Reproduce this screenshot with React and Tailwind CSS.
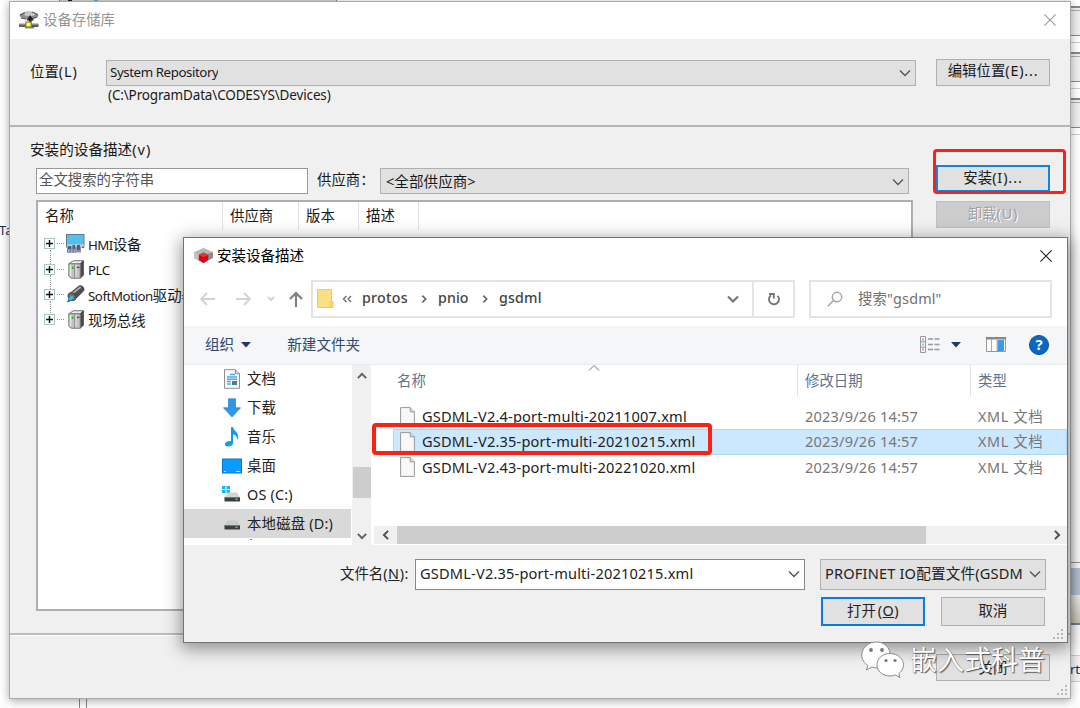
import React from "react";

const UI = "font-['Noto_Sans','Noto_Sans_CJK_SC',sans-serif]";

function Chevron({ dir = "down", className = "" }) {
  const d = { down: "M1 3.5 6 8.5 11 3.5", up: "M1 8.5 6 3.5 11 8.5", left: "M8.5 1 3.5 6 8.5 11", right: "M3.5 1 8.5 6 3.5 11" }[dir];
  return (
    <svg viewBox="0 0 12 12" className={"shrink-0 " + className} fill="none" stroke="currentColor">
      <path d={d} />
    </svg>
  );
}

function Close({ className = "" }) {
  return (
    <svg viewBox="0 0 12 12" className={"h-3 w-3 shrink-0 " + className} fill="none" stroke="currentColor" strokeWidth="1.1">
      <path d="M.4.4 11.6 11.6M11.6.4.4 11.6" />
    </svg>
  );
}

function Grip() {
  return (
    <svg viewBox="0 0 11 11" className="h-[11px] w-[11px]" fill="#b8b8b8">
      {[[8, 0], [8, 4], [8, 8], [4, 4], [4, 8], [0, 8]].map(([x, y]) => (
        <rect key={x + "-" + y} x={x} y={y} width="2" height="2" />
      ))}
    </svg>
  );
}

function RepositoryIcon() {
  return (
    <svg viewBox="0 0 20 18" className="h-[18px] w-5 shrink-0">
      <ellipse cx="10" cy="4.5" rx="9.3" ry="4" fill="#8f8f8f" />
      <ellipse cx="10.500" cy="3" rx="6" ry="2" fill="#c9c9c9" />
      <path d="M1 4 6 2M13 1l6 3M2 7l5 1M12 8l6-2" stroke="#555" />
      <path d="M11 4 7.500 9.500H10V13h2.500V9.500H15Z" fill="#222" />
      <path d="M0 12.5h19.500v2H0zM6 15h9v2.5H6z" fill="#8a8a8a" />
      <path d="M0 14.3h19.500v1.500H0z" fill="#333" />
      <rect x="6.8" y="11" width="5.4" height="5" fill="#f4ee28" stroke="#85801c" />
      <rect x="8.500" y="12.500" width="2" height="2" fill="#fff" />
    </svg>
  );
}

function InstallIcon() {
  return (
    <svg viewBox="0 0 20 16" className="h-4 w-5 shrink-0">
      <path d="M0 4.500 9.500.3l9.500 4V10l-5 2.500H5L0 10Z" fill="#8d8d8d" />
      <path d="m0 4.300 9.500-4 9.500 4-9.500 3Z" fill="#b9b9b9" />
      <path d="M0 4.300V10l5 2.500V6Z" fill="#c4c4c4" />
      <path d="m4.800 7 4.700-2.500L14.200 7v5.300l-4.700 3-4.700-3Z" fill="#d40612" />
      <path d="m4.800 7 4.700-2.500L14.200 7 9.500 9.300Z" fill="#e8343a" />
    </svg>
  );
}

function HmiIcon() {
  return (
    <svg viewBox="0 0 19 20" className="h-5 w-[19px]">
      <rect x=".5" y=".5" width="17.500" height="12.500" fill="#56bfec" stroke="#5f7f91" />
      <path d="M1 10.500h17.500v3.500H1z" fill="#c9d0da" />
      <path d="M1 12.500h14v6H1z" fill="#8b96ad" />
      <path d="M2 12h3v3H2zM6.500 11h2.500v4H6.500zM11 11h3v5h-3z" fill="#526080" />
      <path d="M1 16h9v2.500H1z" fill="#6a7796" />
      <path d="M2 17h1.500M5 17h1.500M8 17h1.500" stroke="#e8ecf3" />
      <path d="M16 12.500h2v1.500h-2z" fill="#d33" />
    </svg>
  );
}

function PlcIcon() {
  return (
    <svg viewBox="0 0 17 20" className="h-[19px] w-4">
      <path d="m.8 4 5-3.300h10.500L13 4Z" fill="#eee" stroke="#666" />
      <path d="m13 4 3.300-3.300V16L13 19.300Z" fill="#4c4c4c" stroke="#444" />
      <path d="M.8 4H13v15.300H3.500L.8 17Z" fill="#c2c2c2" stroke="#777" />
      <path d="M7 4.500v14.500" stroke="#8a8a8a" />
      <path d="M2 5h1.500v12H2zM8 5h1v13H8z" fill="#e9e9e9" />
      <path d="M4 7h2v2.500H4z" fill="#12c51b" />
      <path d="M9.500 7h2.500v1.500H9.500z" fill="#c12" />
    </svg>
  );
}

function MotionIcon() {
  return (
    <svg viewBox="0 0 19 19" className="h-[18px] w-[18px]">
      <path d="M3 9 12.500 1.200c3-1.500 6.500 2 5 5L8 15.500Z" fill="#505050" stroke="#333" />
      <path d="m5.500 9 9-7" stroke="#aaa" strokeWidth="2" />
      <ellipse cx="5.200" cy="12.300" rx="3.700" ry="4.600" transform="rotate(-40 5.200 12.300)" fill="#6c6c6c" stroke="#444" />
      <path d="m1 15.500 3.500-4.500 3 2-4.500 4.500Z" fill="#22c4ee" />
      <path d="m0 18.500 1.500-3.500 2.500 2Z" fill="#1451c9" />
    </svg>
  );
}

function NavIcon({ kind }) {
  if (kind === "doc")
    return (
      <svg viewBox="0 0 20 20" className="h-5 w-5">
        <path d="M2.5.7h11l4 4v14.6h-15Z" fill="#fbfbfb" stroke="#8a8f94" />
        <path d="M13.5.7v4h4" fill="#ddd" stroke="#8a8f94" />
        <path d="M5 8h10M5 10.300h10M5 12.500h4M5 15h4M8 5.500h5" stroke="#45aee5" strokeWidth="1.400" />
        <path d="M10 12h5v4h-5z" fill="#4a7f91" />
      </svg>
    );
  if (kind === "down")
    return (
      <svg viewBox="0 0 20 20" className="h-5 w-5">
        <path d="M6.5.8h7v9h5L10 19 1.5 9.8h5Z" fill="#3296e6" stroke="#2383d2" strokeWidth=".7" />
      </svg>
    );
  if (kind === "music")
    return (
      <svg viewBox="0 0 20 20" className="h-5 w-5" fill="#149bf0">
        <path d="M9 0h2c.5 4 6 5 5 11l-1 2c.2-4-1.500-5-4-5.500V16c0 2-2 3.500-5 3.500-2 0-3.500-1-3-2.800.5-2 3.500-3.200 6-2.700Z" />
      </svg>
    );
  if (kind === "desk")
    return (
      <svg viewBox="0 0 20 20" className="h-5 w-5">
        <rect x=".5" y="3" width="19" height="14" fill="#0c9aff" stroke="#087ac9" />
        <path d="M2 15.500h16" stroke="#bfe5ff" strokeDasharray="2 10 4 1" />
      </svg>
    );
  return (
    <svg viewBox="0 0 20 20" className="h-5 w-5">
      {kind === "os" && <path d="M0 1h3.500v3H0zM4.500 1H8v3H4.500zM0 5h3.500v3H0zM4.500 5H8v3H4.500z" fill="#16b6ed" />}
      <path d="M5.500 7.500h9.500l3 5H2.500Z" fill={kind === "os" ? "#d4d4d4" : "#cacaca"} />
      <path d="M2.500 12h15.500v4.500H2.500z" fill="#3c3e3f" />
      <path d="M2.500 12h15.500v1H2.500z" fill="#777" />
      <path d="M13.500 13.500h2v1.500h-2z" fill="#45e33c" />
    </svg>
  );
}

function FileIcon() {
  return (
    <svg viewBox="0 0 15 20" className="h-5 w-[15px] shrink-0">
      <path d="M.6.6h9.600l4.200 4.200v14.600H.6Z" fill="#f8f8f8" stroke="#999" />
      <path d="M10.200.6v4.200h4.200" fill="#ddd" stroke="#999" />
    </svg>
  );
}

function TreeRow({ icon, children, last }) {
  return (
    <div className="relative flex h-[25.4px] items-center pl-1.5">
      {!last && <span className="absolute left-[12px] top-[19px] h-[14px] border-l border-dotted border-[#999]" />}
      <span className="flex h-[11px] w-[11px] items-center justify-center border border-[#a9c4c4] bg-white">
        <svg viewBox="0 0 7 7" className="h-[7px] w-[7px]" stroke="#111" strokeWidth="1.400"><path d="M0 3.500h7M3.500 0v7" /></svg>
      </span>
      <span className="ml-0.5 w-[7px] border-t border-dotted border-[#999]" />
      <span className="ml-px flex w-[21px] justify-center">{icon}</span>
      <span className="ml-0.5 mt-0.5 whitespace-nowrap">{children}</span>
    </div>
  );
}

function Button({ className = "", children }) {
  return <div className={"flex shrink-0 items-center justify-center whitespace-nowrap bg-[#e1e1e1] " + className}>{children}</div>;
}

function Combo({ className = "", textClass = "", children }) {
  return (
    <div className={"flex shrink-0 items-center justify-between border border-[#b0b0b0] bg-[#e1e1e1] " + className}>
      <span className={"overflow-hidden whitespace-nowrap " + textClass}>{children}</span>
      <Chevron className="h-3 w-3 text-[#555] [stroke-width:1.400]" />
    </div>
  );
}

function RepositoryWindow() {
  return (
    <div className="absolute left-[9px] top-px flex h-[698px] w-[1062px] flex-col border border-[#a9a9a9] bg-[#f0f0f0] text-[13.5px] text-[#1a1a1a] shadow-[0_2px_9px_rgba(0,0,0,0.35)]">
      <div className="flex h-[37px] shrink-0 items-center bg-white pb-px pl-[9px] pr-3.5">
        <RepositoryIcon />
        <span className="ml-1 flex-1 text-[14.4px] text-[#959595]">设备存储库</span>
        <Close className="text-[#999]" />
      </div>
      <div className="flex h-[88px] shrink-0 items-start border-b-2 border-[#b5b5b5] pt-5">
        <span className="ml-5 mt-px w-[76px] text-[14.4px] leading-6">位置<span className="tracking-[0.9px]">(L)</span></span>
        <div className="flex flex-col">
          <Combo className="mt-px h-[26px] w-[810px] pl-[3px] pr-1" textClass="text-[13.300px] tracking-[-0.420px]">System Repository</Combo>
          <span className="ml-0.5 leading-[18px] tracking-[-0.150px]">(C:\ProgramData\CODESYS\Devices)</span>
        </div>
        <Button className="ml-5 h-[27px] w-[114px] border border-[#b0b0b0] pb-[3px] text-[14.4px]">编辑位置<span className="tracking-[0.8px]">(E)...</span></Button>
      </div>
      <div className="flex h-[508px] shrink-0 border-b-2 border-[#bcbcbc] pl-5 shadow-[0_1px_0_#fff]">
        <div className="flex w-[884px] flex-col">
          <span className="mt-[11px] h-[23px] text-[14.600px] leading-[23px]">安装的设备描述<span className="tracking-[1px]">(v)</span></span>
          <div className="ml-[6px] mt-[6px] flex h-[27px] items-center text-[14.4px]">
            <div className="flex h-[26px] w-[272px] items-center border border-[#999] bg-white pb-0.5 pl-0.5 text-[#555]">全文搜索的字符串</div>
            <span className="ml-[9px] w-[63px] whitespace-nowrap pb-0.5">供应商：</span>
            <Combo className="mt-px h-[26px] w-[529px] pl-[5px] pr-1 pt-px" textClass="text-[14.600px]">&lt;全部供应商&gt;</Combo>
          </div>
          <div className="ml-[6px] mt-1.5 h-[411px] w-[877px] border-2 border-[#abaeb4] bg-white text-[14.4px]">
            <div className="flex h-[28px] items-center">
              <span className="w-[184px] pl-[7px]">名称</span>
              <span className="h-full w-[76px] border-l border-[#e2e2e2] pl-[7px] leading-[28px]">供应商</span>
              <span className="h-full w-[60px] border-l border-[#e2e2e2] pl-[7px] leading-[28px]">版本</span>
              <span className="h-full w-[61px] border-x border-[#e2e2e2] pl-[7px] leading-[28px]">描述</span>
            </div>
            <div className="flex flex-col pt-px text-[14.400px]">
              <TreeRow icon={<HmiIcon />}><span className="text-[13.300px] tracking-[-0.600px]">HMI</span>设备</TreeRow>
              <TreeRow icon={<PlcIcon />}><span className="text-[13.300px] tracking-[-0.500px]">PLC</span></TreeRow>
              <TreeRow icon={<MotionIcon />}><span className="text-[13.300px] tracking-[-0.450px]">SoftMotion</span>驱动器</TreeRow>
              <TreeRow icon={<PlcIcon />} last>现场总线</TreeRow>
            </div>
          </div>
        </div>
        <div className="ml-[22px] flex flex-col gap-[9px] pt-[38px] text-[14.4px]">
          <Button className="h-[27px] w-[114px] border-2 border-[#1683d8] pb-0.5">安装<span className="tracking-[0.9px]">(I)...</span></Button>
          <Button className="h-[27px] w-[114px] border border-[#bfbfbf] !bg-[#cccccc] pb-0.5 text-[#a0a0a0] [text-shadow:1px_1px_0_#fff]">卸载<span className="tracking-[0.8px]">(U)</span></Button>
        </div>
      </div>
      <div className="flex flex-1 items-start justify-end pr-5 pt-[19px]">
        <Button className="h-[27px] w-[114px] border border-[#b0b0b0] text-[14.4px]">关闭</Button>
      </div>
      <div className="absolute bottom-0.5 right-0.5"><Grip /></div>
    </div>
  );
}

const NAV = [["doc", "文档"], ["down", "下载"], ["music", "音乐"], ["desk", "桌面"], ["os", "OS (C:)"], ["disk", "本地磁盘 (D:)"]];
const FILES = ["GSDML-V2.4-port-multi-20211007.xml", "GSDML-V2.35-port-multi-20210215.xml", "GSDML-V2.43-port-multi-20221020.xml"];

function AddressBar() {
  return (
    <div className="flex h-[38px] shrink-0 items-center">
      <svg viewBox="0 0 104 16" className="ml-4 h-4 w-[104px]" fill="none" stroke="#d2d2d2" strokeWidth="1.800">
        <path d="M7 2 1 8l6 6M1 8h14M44 2l6 6-6 6M50 8H36" />
        <path d="m68 6 3 3 3-3" />
        <path d="m90 8 6-6 6 6M96 2v14" stroke="#808080" strokeWidth="2.200" />
      </svg>
      <div className="ml-[7px] flex h-[38px] w-[484px] items-center border-2 border-[#e4e4e4] text-[14.200px] text-[#444]">
        <svg viewBox="0 0 17 20" className="ml-1 h-5 w-[17px]">
          <path d="M.5.500h14v18H.500Z" fill="#fddf83" stroke="#efc960" />
          <path d="M13.500 12h3v7h-4v-7Z" fill="#f8d15c" />
        </svg>
        <svg viewBox="0 0 10 8" className="ml-2 h-2 w-2.5" fill="none" stroke="#666" strokeWidth="1.300"><path d="M4.500 1 1.500 4l3 3M9 1 6 4l3 3" /></svg>
        <span className="ml-[10px] w-[58px] pb-0.5 font-medium tracking-[0.3px]">protos</span>
        <Chevron dir="right" className="h-2 w-2 text-[#666] [stroke-width:2.500]" />
        <span className="ml-[10px] w-[43px] pb-0.5 font-medium tracking-[0.1px]">pnio</span>
        <Chevron dir="right" className="h-2 w-2 text-[#666] [stroke-width:2.500]" />
        <span className="ml-[10px] flex-1 pb-0.5 font-medium tracking-[0.200px]">gsdml</span>
        <Chevron className="mr-[13px] h-3 w-3 text-[#777] [stroke-width:2.200]" />
        <div className="flex h-full w-[41px] items-center justify-center border-l-2 border-[#e4e4e4]">
          <svg viewBox="0 0 14 14" className="h-3.5 w-3.5" fill="none" stroke="#757575" strokeWidth="1.900"><path d="M10.500 3.800A5 5 0 1 1 4 3.300M2 2h4.800v4.500" /></svg>
        </div>
      </div>
      <div className="ml-3.5 flex h-[38px] w-[243px] items-center border-2 border-[#e4e4e4] text-[14.4px] text-[#707070]">
        <svg viewBox="0 0 16 16" className="ml-4 h-4 w-4" fill="none" stroke="#a8a0a6" strokeWidth="1.400"><circle cx="10" cy="6" r="4.700" /><path d="M6.500 9.500.8 15.200" /></svg>
        <span className="ml-[15px] tracking-[0.150px]">搜索"gsdml"</span>
      </div>
    </div>
  );
}

function Toolbar() {
  return (
    <div className="mt-2 flex h-[39px] shrink-0 items-center border-b border-[#e9ebed] bg-[#f4f6f8] pb-px text-[14.600px] text-[#2f4a70]">
      <span className="ml-[21px]">组织</span>
      <svg viewBox="0 0 10 6" className="ml-[7px] h-1.5 w-2.5" fill="#1f3b63"><path d="M0 0h10L5 5.500Z" /></svg>
      <span className="ml-9 flex-1">新建文件夹</span>
      <svg viewBox="0 0 20 17" className="h-[17px] w-5" fill="none" stroke="#999">
        <path d="M.5.500h5v16h-5zM.500 5.800h5M.500 11.200h5" />
        <path d="M8 3h5M14.500 3h5M8 8.500h5M14.500 8.500h5M8 13.500h5M14.500 13.500h5" strokeWidth="1.300" />
        <path d="M3 7.500v2" stroke="#3a8be0" /><path d="M3 12.500v2" stroke="#d33" /><path d="M3 2.500v2" stroke="#666" />
      </svg>
      <svg viewBox="0 0 10 6" className="ml-[11px] h-1.5 w-2.5" fill="#1f3b63"><path d="M0 0h10L5 5.500Z" /></svg>
      <svg viewBox="0 0 20 15" className="ml-[25px] h-[15px] w-5">
        <path d="M.5.500h19v14H.500Z" fill="#fff" stroke="#999" /><path d="M0 0h20v2.500H0Z" fill="#888" />
        <path d="M5.500 2v12M11 2v12" stroke="#aaa" /><path d="M11.500 3H18v11h-6.500Z" fill="#3b9ae6" />
      </svg>
      <span className="ml-[23px] mr-[18px] flex h-5 w-5 items-center justify-center rounded-full border border-[#0a4f96] bg-[#0868c4] text-[15px] font-bold leading-none text-white">?</span>
    </div>
  );
}

function InstallDialog() {
  return (
    <div className="absolute left-[183px] top-[237px] flex h-[406px] w-[885px] flex-col border border-[#747474] bg-white text-[14.4px] text-[#222] shadow-[0_4px_16px_2px_rgba(0,0,0,0.4)]">
      <div className="flex h-[42px] shrink-0 items-center pb-[6px] pl-2.5 pr-[15px]">
        <InstallIcon />
        <span className="ml-[3px] flex-1 text-[14.500px] text-black">安装设备描述</span>
        <Close className="text-[#222]" />
      </div>
      <AddressBar />
      <Toolbar />
      <div className="flex h-[180px] shrink-0">
        <div className="flex w-[168px] flex-col overflow-hidden">
          {NAV.map(([kind, label]) => (
            <div key={kind} className={"flex h-[28.900px] shrink-0 items-center pb-px pl-[38px] " + (kind === "disk" ? "w-[167px] bg-[#d9d9d9]" : "")}>
              <NavIcon kind={kind} />
              <span className="whitespace-nowrap pl-[5px] tracking-[0.200px]">{label}</span>
            </div>
          ))}
          <span className="ml-[66px] mt-px h-px w-0.5 shrink-0 bg-[#777]" />
        </div>
        <div className="flex w-[19px] flex-col items-center justify-between bg-[#f0f0f0] py-1 text-[#606060]">
          <Chevron dir="up" className="mt-0.5 h-2.5 w-2.5 [stroke-width:2.400]" />
          <div className="mt-[53px] h-[31px] w-[18px] bg-[#cdcdcd]" />
          <Chevron className="h-2.5 w-2.5 [stroke-width:2.400]" />
        </div>
        <div className="flex flex-1 flex-col pl-[3px]">
          <div className="relative flex h-[32px] items-center text-[#60728c]">
            <span className="flex-1 pl-[23px]">名称</span>
            <span className="h-full w-[173px] border-l border-[#e2e2e2] pl-[7px] leading-[32px]">修改日期</span>
            <span className="h-full w-[97px] border-l border-[#e2e2e2] pl-[7px] leading-[32px]">类型</span>
            <Chevron dir="up" className="absolute left-[214px] top-[-3px] h-3 w-3 text-[#777]" />
          </div>
          <div className="mt-[7px] flex flex-1 flex-col">
            {FILES.map((name, i) => (
              <div key={name} className={"ml-[19px] flex h-[25.400px] items-center pl-[7px] " + (i === 1 ? "bg-[#cce8ff] shadow-[inset_0_0_0_1px_#a9d8fa]" : "")}>
                <FileIcon />
                <span className="ml-[7px] w-[383px] whitespace-nowrap text-[14.600px] tracking-[0.180px]">{name}</span>
                <span className="w-[173px] whitespace-nowrap text-[14.600px] tracking-[0.180px] text-[#777]">2023/9/26 14:57</span>
                <span className="whitespace-nowrap tracking-[0.600px] text-[#777]">XML 文档</span>
              </div>
            ))}
          </div>
          <div className="mb-px flex h-[18px] items-center bg-[#f0f0f0] text-[#505050]">
            <Chevron dir="left" className="ml-[7px] h-2.5 w-2.5 [stroke-width:2.400]" />
            <div className="ml-1.5 h-full w-[529px] bg-[#cdcdcd]" />
            <span className="flex-1" />
            <Chevron dir="right" className="mr-[5px] h-2.5 w-2.5 [stroke-width:2.400]" />
          </div>
        </div>
      </div>
      <div className="flex flex-1 flex-col bg-[#f0f0f0] pt-[13px]">
        <div className="flex h-8 items-center">
          <span className="ml-[156px] w-[75px] whitespace-nowrap">文件名<span className="tracking-[0.600px]">(<u>N</u>):</span></span>
          <div className="flex h-[31px] w-[390px] items-center justify-between border border-[#888] bg-white pl-1 pr-1 text-[14.600px] tracking-[0.180px]">
            <span>{FILES[1]}</span>
            <Chevron className="h-3 w-3 text-[#555] [stroke-width:1.400]" />
          </div>
          <Combo className="ml-[15px] h-[31px] w-[226px] pl-1 pr-1" textClass="w-[199px] text-[14.600px] tracking-[0.170px]">PROFINET IO配置文件(GSDM</Combo>
        </div>
        <div className="ml-[637px] mt-[7px] flex gap-4">
          <Button className="h-[29px] w-[104px] border-2 border-[#0a7cdb] pb-0.5"><span className="mr-0.5">打开</span><span className="tracking-[0.400px]">(<u>O</u>)</span></Button>
          <Button className="h-[29px] w-[104px] border border-[#b0b0b0] pb-0.5">取消</Button>
        </div>
      </div>
      <div className="absolute bottom-0.5 right-[3px]"><Grip /></div>
    </div>
  );
}

function Watermark() {
  return (
    <div className="absolute left-[861px] top-[640px] flex items-center gap-[6px] text-white">
      <svg viewBox="0 0 43 39" className="h-[39px] w-[43px]" fill="#fff" stroke="#8a8a8a" strokeWidth="1">
        <path d="M15.500 1C7 1 .800 7 .800 14c0 4.500 2.400 8 6 10.500L5.500 29l5.500-3c3 1 6 1.200 9 .800C33 25 33 1 15.500 1Z" />
        <path d="M29 12.500c-7.500 0-13 5-13 11.300S21.500 35 29 35c2 0 3.500-.300 5.500-1l4.500 2.500-1.200-4c3-2.200 4.700-5.200 4.700-8.700C42.500 17.500 36.500 12.500 29 12.500Z" />
        <g fill="#777" stroke="none"><circle cx="10" cy="9" r="1.900" /><circle cx="21" cy="9" r="1.900" /><circle cx="25" cy="19.500" r="1.600" /><circle cx="34" cy="19.500" r="1.600" /></g>
      </svg>
      <span className="whitespace-nowrap text-[27px] leading-[40px] [text-shadow:1px_1px_1px_#555,0_0_1px_#777]">嵌入式科普</span>
    </div>
  );
}

function ToolStrip({ className = "" }) {
  return (
    <div className={"h-[30px] shrink-0 border-b border-t-2 border-[#888] bg-[#efefef] pt-0.5 " + className}>
      <div className="h-px bg-[#aaa]" />
    </div>
  );
}

function Backdrop() {
  return (
    <div className="flex h-full justify-between bg-white text-[13px] text-[#1c2860]">
      <div className="flex w-[341px] flex-col">
        <div className="ml-[59px] flex h-0.5 w-[278px] border-x border-[#777] bg-[#d5d5d5]">
          <span className="ml-2 w-1 bg-[#222]" />
          <span className="ml-[22px] w-1 bg-[#58a8e8]" />
        </div>
        <span className="-ml-px mt-[219px] h-[18px] w-[14px] leading-[18px]">Ta</span>
        <div className="ml-[79px] mt-[459px] flex-1 w-2 border-x border-[#888]" />
      </div>
      <div className="flex w-[10px] flex-col">
        <ToolStrip className="mt-1.5" />
        <div className="mt-1.5 h-px bg-[#ccc]" />
        <ToolStrip className="mt-[9px]" />
        <div className="mt-1.5 h-px bg-[#ccc]" />
        <ToolStrip className="mt-[9px]" />
        <div className="mt-1.5 h-px bg-[#ccc]" />
        <div className="mt-[427px] h-1.5 border-t border-[#999]" />
        <div className="h-[27px] bg-[#b9c5d7]" />
        <div className="h-[30px] border-b-2 border-[#7a809c] bg-gradient-to-b from-[#f1f0ec] to-[#c9c9b8]" />
        <div className="mt-[30px] flex h-[27px] justify-end overflow-hidden border-y border-[#ccc] bg-[#f2f2f2] leading-[26px]">ort</div>
      </div>
    </div>
  );
}

export default function App() {
  return (
    <div className={"relative h-[708px] w-[1080px] overflow-hidden " + UI}>
      <Backdrop />
      <RepositoryWindow />
      <div className="absolute left-[933px] top-[149px] h-[45px] w-[133px] rounded border-[3.500px] border-[#ff2015]" />
      <InstallDialog />
      <div className="absolute left-[372px] top-[423px] h-8 w-[340px] rounded border-4 border-[#ff2015]" />
      <Watermark />
    </div>
  );
}
